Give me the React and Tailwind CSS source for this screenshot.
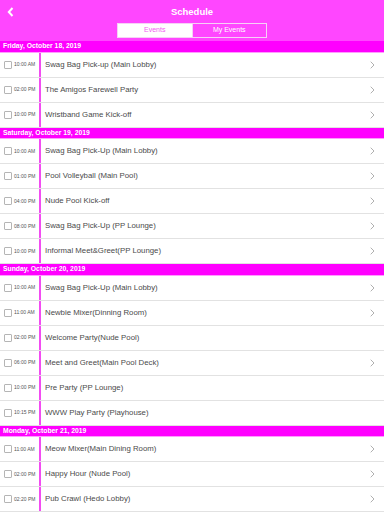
import React from "react";

const days = [
  {
    label: "Friday, October 18, 2019",
    rows: [
      ["10:00 AM", "Swag Bag Pick-up (Main Lobby)", true],
      ["02:00 PM", "The Amigos Farewell Party", true],
      ["10:00 PM", "Wristband Game Kick-off", true],
    ],
  },
  {
    label: "Saturday, October 19, 2019",
    rows: [
      ["10:00 AM", "Swag Bag Pick-Up (Main Lobby)", true],
      ["01:00 PM", "Pool Volleyball (Main Pool)", true],
      ["04:00 PM", "Nude Pool Kick-off", true],
      ["08:00 PM", "Swag Bag Pick-Up (PP Lounge)", true],
      ["10:00 PM", "Informal Meet&Greet(PP Lounge)", true],
    ],
  },
  {
    label: "Sunday, October 20, 2019",
    rows: [
      ["10:00 AM", "Swag Bag Pick-Up (Main Lobby)", true],
      ["11:00 AM", "Newbie Mixer(Dinning Room)", true],
      ["02:00 PM", "Welcome Party(Nude Pool)", false],
      ["06:00 PM", "Meet and Greet(Main Pool Deck)", true],
      ["10:00 PM", "Pre Party (PP Lounge)", false],
      ["10:15 PM", "WWW Play Party (Playhouse)", false],
    ],
  },
  {
    label: "Monday, October 21, 2019",
    rows: [
      ["11:00 AM", "Meow Mixer(Main Dining Room)", true],
      ["02:00 PM", "Happy Hour (Nude Pool)", true],
      ["02:20 PM", "Pub Crawl (Hedo Lobby)", true],
    ],
  },
];

function Row({ time, title, chevron }) {
  return (
    <div className="flex h-[25px] items-stretch border-b border-[#e2e2e2] bg-white">
      <div className="flex w-[39px] shrink-0 items-center pl-[4px]">
        <div className="h-[8px] w-[8px] rounded-[1px] border border-[#b5b5b5] bg-white" />
        <span className="ml-[2px] text-[5px] leading-none text-[#555]">{time}</span>
      </div>
      <div className="w-[2px] shrink-0 bg-[#f24cf2]" />
      <div className="flex flex-1 items-center pl-[4px] text-[7.8px] text-[#4a4a4a]">
        {title}
      </div>
      {chevron && (
        <div className="flex w-[14px] items-center">
          <svg width="5" height="8" viewBox="0 0 5 8">
            <path d="M0.7 0.7 L4 4 L0.7 7.3" fill="none" stroke="#b0b0b0" strokeWidth="1" />
          </svg>
        </div>
      )}
    </div>
  );
}

export default function App() {
  return (
    <div
      className="h-[512px] w-[384px] overflow-hidden bg-white"
      style={{ fontFamily: '"Liberation Sans", Arial, sans-serif' }}
    >
      <div className="relative h-[41px] bg-[#ff46ff]">
        <div className="absolute left-[7px] top-[7px]">
          <svg width="7" height="10" viewBox="0 0 7 10">
            <path d="M5.5 1 L1.8 5 L5.5 9" fill="none" stroke="white" strokeWidth="2" />
          </svg>
        </div>
        <div className="pt-[5px] text-center text-[9.5px] font-bold leading-[14px] text-white">
          Schedule
        </div>
        <div className="mx-auto mt-[4px] flex h-[15px] w-[150px] border border-[#f6d0f6]">
          <div className="flex flex-1 items-center justify-center bg-white text-[7px] text-[#f060f0]">
            Events
          </div>
          <div className="flex flex-1 items-center justify-center border-l border-[#f6d0f6] text-[7px] text-white">
            My Events
          </div>
        </div>
      </div>
      {days.map((d) => (
        <div key={d.label}>
          <div className="flex h-[11.5px] items-center border-b border-[#ff9cff] bg-[#ff00ff] pl-[3px] text-[6.8px] font-bold text-white">
            {d.label}
          </div>
          {d.rows.map(([t, title, c]) => (
            <Row key={t + title} time={t} title={title} chevron={c} />
          ))}
        </div>
      ))}
    </div>
  );
}
